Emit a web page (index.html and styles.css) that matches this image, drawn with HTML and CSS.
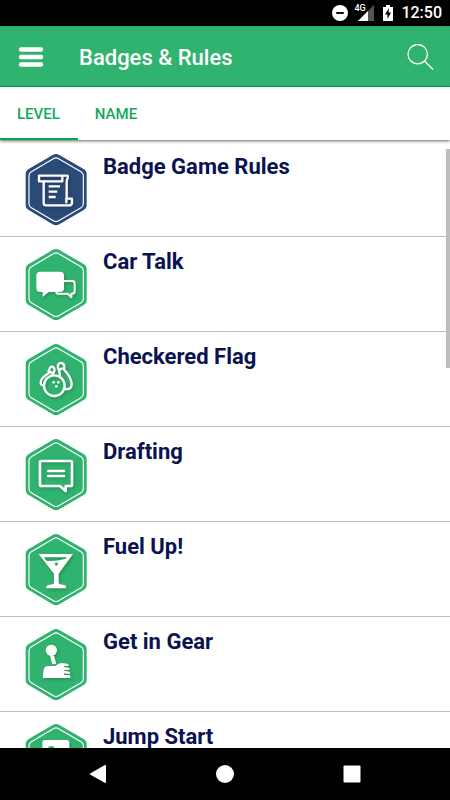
FILE: index.html
```html
<!DOCTYPE html>
<html lang="en">
<head>
<meta charset="utf-8">
<meta name="viewport" content="width=device-width, initial-scale=1">
<title>Badges &amp; Rules</title>
<link rel="stylesheet" href="styles.css">
</head>
<body>
<svg class="defs" aria-hidden="true">
  <symbol id="hex" viewBox="0 0 240 270">
    <path fill="currentColor" d="M110 30Q120 24 130 30L203 72Q212 77 212 88V180Q212 190 203 195L130 238Q120 244 110 238L38 195Q29 190 29 180V88Q29 77 38 72Z"/>
    <path fill="none" stroke="#fff" stroke-width="3.500" d="M112 41Q120 36 128 41L195 80Q202 84 202 92V176Q202 184 195 188L128 227Q120 232 112 227L46 188Q39 184 39 176V92Q39 84 46 80Z"/>
  </symbol>
</svg>
<div class="app">
  <div class="status">
    <svg width="16" height="16" viewBox="0 0 17 17"><circle cx="8.500" cy="8.500" r="8.500" fill="#fff"/><path d="M4.500 8.500h8" stroke="#000" stroke-width="2"/></svg>
    <span class="signal"><span class="network">4G</span><svg width="16" height="16" viewBox="0 0 16 16"><path d="M16 0V16H0Z" fill="#555"/><path d="M10 6V16H0Z" fill="#fff"/></svg></span>
    <svg class="battery" width="10" height="16" viewBox="0 0 10 16"><path d="M3 0H7V2H10V16H0V2H3Z" fill="#fff"/><path d="M6 3L2 9.500H4.500V14L8 7.500H5.500Z" fill="#000"/></svg>
    <time>12:50</time>
  </div>
  <header class="toolbar">
    <button class="icon-button" aria-label="Menu"><svg width="26" height="20" viewBox="0 0 26 20"><path d="M3 2.500H23M3 10H23M3 17.500H23" stroke="#fff" stroke-width="4.400" stroke-linecap="round"/></svg></button>
    <h1>Badges &amp; Rules</h1>
    <button class="icon-button" aria-label="Search"><svg width="27" height="26" viewBox="0 0 27 26" fill="none" stroke="#fff" stroke-width="1.300"><circle cx="10.700" cy="10.200" r="9.700"/><path d="M17.500 17L26 25.500"/></svg></button>
  </header>
  <nav class="tabs">
    <button class="tab active">LEVEL</button>
    <button class="tab">NAME</button>
  </nav>
  <main class="content">
    <ul class="list">
      <li class="row">
        <svg class="badge rules" viewBox="0 0 240 270"><use href="#hex"/>
          <g class="glyph" fill="none" stroke="#fff" stroke-width="7" stroke-linejoin="round" stroke-linecap="round">
            <path d="M85 109H69V92H153Q157 92 155 99Q152 105 152 111V161H168V174Q167 181 159 181H91Q83 181 83 173V110"/><path d="M85 109H139V93M151 162V172"/><path stroke-linecap="butt" d="M98 124H132M98 140H124M98 156H119"/></g>
        </svg><h2>Badge Game Rules</h2></li>
      <li class="row">
        <svg class="badge" viewBox="0 0 240 270"><use href="#hex"/>
          <g class="glyph"><path fill="none" stroke="#fff" stroke-width="6" stroke-linejoin="round" d="M144 123H169Q176 123 176 131V154Q176 161 169 161H166V172L155 161H126Q121 161 121 156"/><path fill="#fff" d="M73 95H132Q144 95 144 107V143Q144 156 132 156H98L80 171V156H73Q61 156 61 143V107Q61 95 73 95Z"/></g>
        </svg><h2>Car Talk</h2></li>
      <li class="row">
        <svg class="badge" viewBox="0 0 240 270"><use href="#hex"/>
          <g class="glyph" fill="none" stroke="#fff" stroke-width="7" stroke-linecap="round" stroke-linejoin="round"><circle cx="115" cy="152" r="31"/><path d="M83 151Q73 151 74 140Q77 127 99 114Q97 104 102 98Q109 92 114 99Q119 106 109 119"/><path d="M98 109L109 113M131 103L143 99M132 123L130 108Q122 94 128 87Q134 80 142 87Q147 91 144 104Q164 124 167 146Q167 157 162 160Q155 163 147 162"/><g fill="#fff" stroke="none"><circle cx="113" cy="142" r="4"/><circle cx="127" cy="142" r="4"/><circle cx="121" cy="154" r="4"/></g></g>
        </svg><h2>Checkered Flag</h2></li>
      <li class="row">
        <svg class="badge" viewBox="0 0 240 270"><use href="#hex"/>
          <g class="glyph" fill="none" stroke="#fff" stroke-width="8" stroke-linecap="round" stroke-linejoin="round"><path d="M76 93H164Q168 93 168 97V164Q168 168 164 168H149V183L132 168H76Q72 168 72 164V97Q72 93 76 93Z"/><path d="M97 123H144M97 138H144"/></g>
        </svg><h2>Drafting</h2></li>
      <li class="row">
        <svg class="badge" viewBox="0 0 240 270"><use href="#hex"/>
          <g class="glyph"><path fill="#fff" fill-rule="evenodd" d="M68 87H171L128 146V175Q130 179 147 180Q151 182 151 190H90Q90 181 96 180Q112 179 114 175V146ZM84 97L91 107Q114 111 149 101L152 97Z"/><circle cx="121" cy="117" r="5" fill="#30b36e"/></g>
        </svg><h2>Fuel Up!</h2></li>
      <li class="row">
        <svg class="badge" viewBox="0 0 240 270"><use href="#hex"/>
          <g class="glyph" fill="#fff"><circle cx="106" cy="91" r="17"/><path d="M102 107H114L121 131L109 133Z"/><path d="M80 174L83 148Q85 140 92 139L119 137Q127 129 137 129L154 131Q160 134 157 138L144 138V141L159 143Q163 147 159 150L145 149V152L161 155Q165 158 160 162L144 160V164L162 166Q164 170 163 174Z"/></g>
        </svg><h2>Get in Gear</h2></li>
      <li class="row">
        <svg class="badge" viewBox="0 0 240 270"><use href="#hex"/>
          <g class="glyph"><rect x="79" y="75" width="81" height="70" rx="8" fill="#fff"/><circle cx="106" cy="104" r="11" fill="#30b36e"/></g>
        </svg><h2>Jump Start</h2></li>
    </ul>
    <div class="scroll-thumb"></div>
  </main>
  <nav class="system">
    <button aria-label="Back"><svg width="18" height="18" viewBox="0 0 18 18"><path d="M16 1V17L2 9Z" fill="#fff" stroke="#fff" stroke-width="2" stroke-linejoin="round"/></svg></button>
    <button aria-label="Home"><svg width="18" height="18" viewBox="0 0 18 18"><circle cx="9" cy="9" r="9" fill="#fff"/></svg></button>
    <button aria-label="Overview"><svg width="18" height="18" viewBox="0 0 18 18"><rect x="0.500" y="0.500" width="17" height="17" rx="1" fill="#fff"/></svg></button>
  </nav>
</div>
</body>
</html>
```
FILE: styles.css
```css
* { box-sizing: border-box; }
body { margin: 0; background: #fff; font-family: Roboto, "Liberation Sans", sans-serif; }
button { border: 0; padding: 0; background: none; font: inherit; color: inherit; }
svg { display: block; flex: none; }
h1, h2, ul { margin: 0; padding: 0; }
.defs { position: absolute; width: 0; height: 0; }
.app { height: 100vh; display: flex; flex-direction: column; overflow: hidden; }
.status { height: 26px; flex: none; display: flex; align-items: center; justify-content: flex-end; padding: 0 8px; gap: 8px; background: #000; color: #fff; font-size: 16px; font-weight: 500; }
.status time { line-height: 28px; }
.signal { position: relative; margin-right: 1px; padding-left: 2px; }
.network { position: absolute; left: -2px; top: -1px; font-size: 9px; line-height: 9px; font-weight: 500; }
.toolbar { height: 61px; flex: none; display: flex; align-items: center; padding: 0 16px 0 18px; background: #30b36e; color: #fff; border-top: 1px solid #2a9f62; border-bottom: 1px solid #00a651; }
.toolbar h1 { flex: 1; margin-left: 35px; padding-top: 2px; font-size: 22px; line-height: 28px; font-weight: 500; }
.tabs { position: relative; z-index: 1; height: 53px; flex: none; display: flex; background: #fff; box-shadow: 0 1px 3px rgba(0, 0, 0, 0.6); }
.tab { padding: 3px 18px 0 17px; border-bottom: 2px solid transparent; color: #12a85a; font-size: 15px; font-weight: 500; }
.tab.active { border-bottom-color: #00a651; }
.content { position: relative; flex: 1; min-height: 0; padding-top: 2px; overflow: hidden; }
.list { list-style: none; }
.row { height: 95px; display: flex; align-items: flex-start; gap: 7px; padding: 3px 16px 0; border-bottom: 1px solid #bdbdbd; }
.row h2 { padding-top: 8px; color: #0a1250; font-size: 22px; line-height: 28px; font-weight: 700; }
.badge { width: 80px; height: 90px; color: #30b36e; }
.badge.rules { color: #2a4a78; }
.glyph { filter: drop-shadow(4px 5px 4px rgba(0, 0, 0, 0.2)); }
.scroll-thumb { position: absolute; top: 9px; right: 0; width: 4px; height: 219px; background: #bdbdbd; }
.system { height: 52px; flex: none; display: flex; align-items: center; justify-content: center; padding: 0 35px; background: #000; }
.system button { flex: 1; display: flex; justify-content: center; }
```
